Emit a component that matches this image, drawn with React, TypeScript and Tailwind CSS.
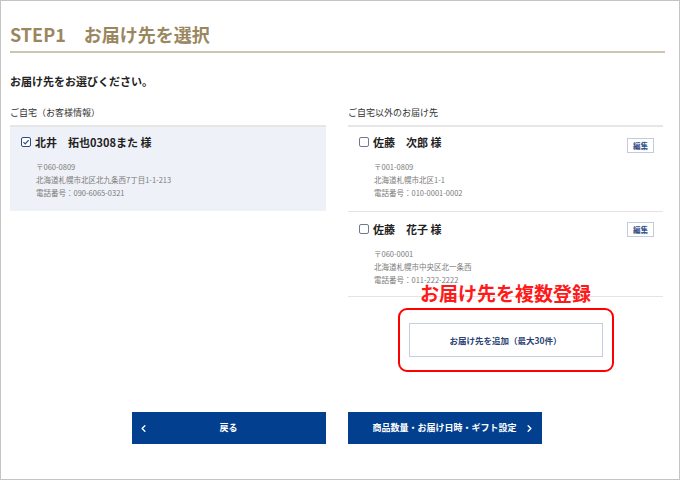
import { ChevronLeft, ChevronRight } from "lucide-react";

const font = { fontFamily: '"Noto Sans CJK JP", "Noto Sans", sans-serif' };

type Address = {
  name: string;
  zip: string;
  line: string;
  tel: string;
};

const home: Address = {
  name: "北井　拓也0308また 様",
  zip: "〒060-0809",
  line: "北海道札幌市北区北九条西7丁目1-1-213",
  tel: "電話番号：090-6065-0321",
};

const others: Address[] = [
  {
    name: "佐藤　次郎 様",
    zip: "〒001-0809",
    line: "北海道札幌市北区1-1",
    tel: "電話番号：010-0001-0002",
  },
  {
    name: "佐藤　花子 様",
    zip: "〒060-0001",
    line: "北海道札幌市中央区北一条西",
    tel: "電話番号：011-222-2222",
  },
];

function CheckBox({ checked }: { checked?: boolean }) {
  return (
    <span
      className={`flex h-[10px] w-[10px] shrink-0 items-center justify-center rounded-[2px] border ${
        checked ? "border-[#2f4c82] bg-white" : "border-[#6f7a92] bg-white"
      }`}
    >
      {checked && (
        <svg viewBox="0 0 10 10" className="h-[8px] w-[8px]">
          <path d="M1.8 5.2 L4 7.3 L8.3 2.6" fill="none" stroke="#2f4c82" strokeWidth="1.5" />
        </svg>
      )}
    </span>
  );
}

function AddressBlock({ a, checked }: { a: Address; checked?: boolean }) {
  return (
    <>
      <div className="flex h-[14px] items-center">
        <div className="flex w-[25px] justify-end pr-[4px]">
          <CheckBox checked={checked} />
        </div>
        <span className="text-[11px] font-bold leading-[14px] text-[#222]">{a.name}</span>
      </div>
      <div className="mt-[11px] pl-[26px] text-[7.5px] leading-[13px] text-[#7a7a7a]">
        <div>{a.zip}</div>
        <div>{a.line}</div>
        <div>{a.tel}</div>
      </div>
    </>
  );
}

export default function App() {
  return (
    <div
      className="relative h-[480px] w-[680px] overflow-hidden border border-[#c4c4c4] bg-white"
      style={font}
    >
      <div className="pl-[9px] pr-[14px]">
        {/* header */}
        <div className="mt-[23px] border-b-2 border-[#cdc5ae] pb-[7px]">
          <h1 className="h-[20px] text-[18px] font-bold leading-[20px] text-[#9b875f]">
            STEP1　お届け先を選択
          </h1>
        </div>

        <p className="mt-[20px] h-[16px] text-[11px] font-bold leading-[16px] text-[#222]">
          お届け先をお選びください。
        </p>

        <div className="mt-[18px] flex gap-[22px] pr-[2px]">
          {/* home */}
          <div className="w-[316px]">
            <div className="h-[20px] border-b-2 border-[#e6e6e6] text-[9px] leading-[12px] text-[#333]">
              ご自宅（お客様情報）
            </div>
            <div className="h-[84px] bg-[#eef2f8] pt-[8px]">
              <AddressBlock a={home} checked />
            </div>
          </div>

          {/* others */}
          <div className="flex-1">
            <div className="h-[20px] border-b-2 border-[#e6e6e6] text-[9px] leading-[12px] text-[#333]">
              ご自宅以外のお届け先
            </div>
            {others.map((a, i) => (
              <div
                key={a.name}
                className={`relative h-[85px] border-b border-[#e4e4e4] ${i === 0 ? "pt-[8px]" : "pt-[10px]"}`}
              >
                <AddressBlock a={a} />
                <button
                  className={`absolute right-[9px] flex h-[15px] w-[27px] items-center justify-center border border-[#c3cad9] bg-white text-[7.5px] font-bold text-[#34508a] ${
                    i === 0 ? "top-[11px]" : "top-[10px]"
                  }`}
                >
                  編集
                </button>
              </div>
            ))}

            <div className="mt-[11px] flex justify-center">
              <div className="flex h-[64px] w-[216px] items-center justify-center rounded-[9px] border-2 border-[#ff0000]">
                <button className="h-[34px] w-[194px] border border-[#c5cde0] bg-white text-[8.5px] font-bold text-[#2b4377]">
                  お届け先を追加（最大30件）
                </button>
              </div>
            </div>
          </div>
        </div>

        {/* footer buttons */}
        <div className="mt-[40px] flex justify-center gap-[22px] pr-[2px]">
          <button className="grid h-[32px] w-[194px] grid-cols-[20px_1fr_20px] items-center bg-[#023f8e] text-[9px] font-bold text-white">
            <ChevronLeft className="ml-[6px] h-[11px] w-[11px]" strokeWidth={3} />
            <span>戻る</span>
            <span />
          </button>
          <button className="grid h-[32px] w-[194px] grid-cols-[20px_1fr_20px] items-center bg-[#023f8e] text-[9px] font-bold text-white">
            <span />
            <span>商品数量・お届け日時・ギフト設定</span>
            <ChevronRight className="ml-[2px] h-[11px] w-[11px]" strokeWidth={3} />
          </button>
        </div>
      </div>

      {/* annotation */}
      <div className="absolute left-[419px] top-[280px] text-[19px] font-bold leading-[24px] text-[#ff1a1a]">
        お届け先を複数登録
      </div>
    </div>
  );
}
